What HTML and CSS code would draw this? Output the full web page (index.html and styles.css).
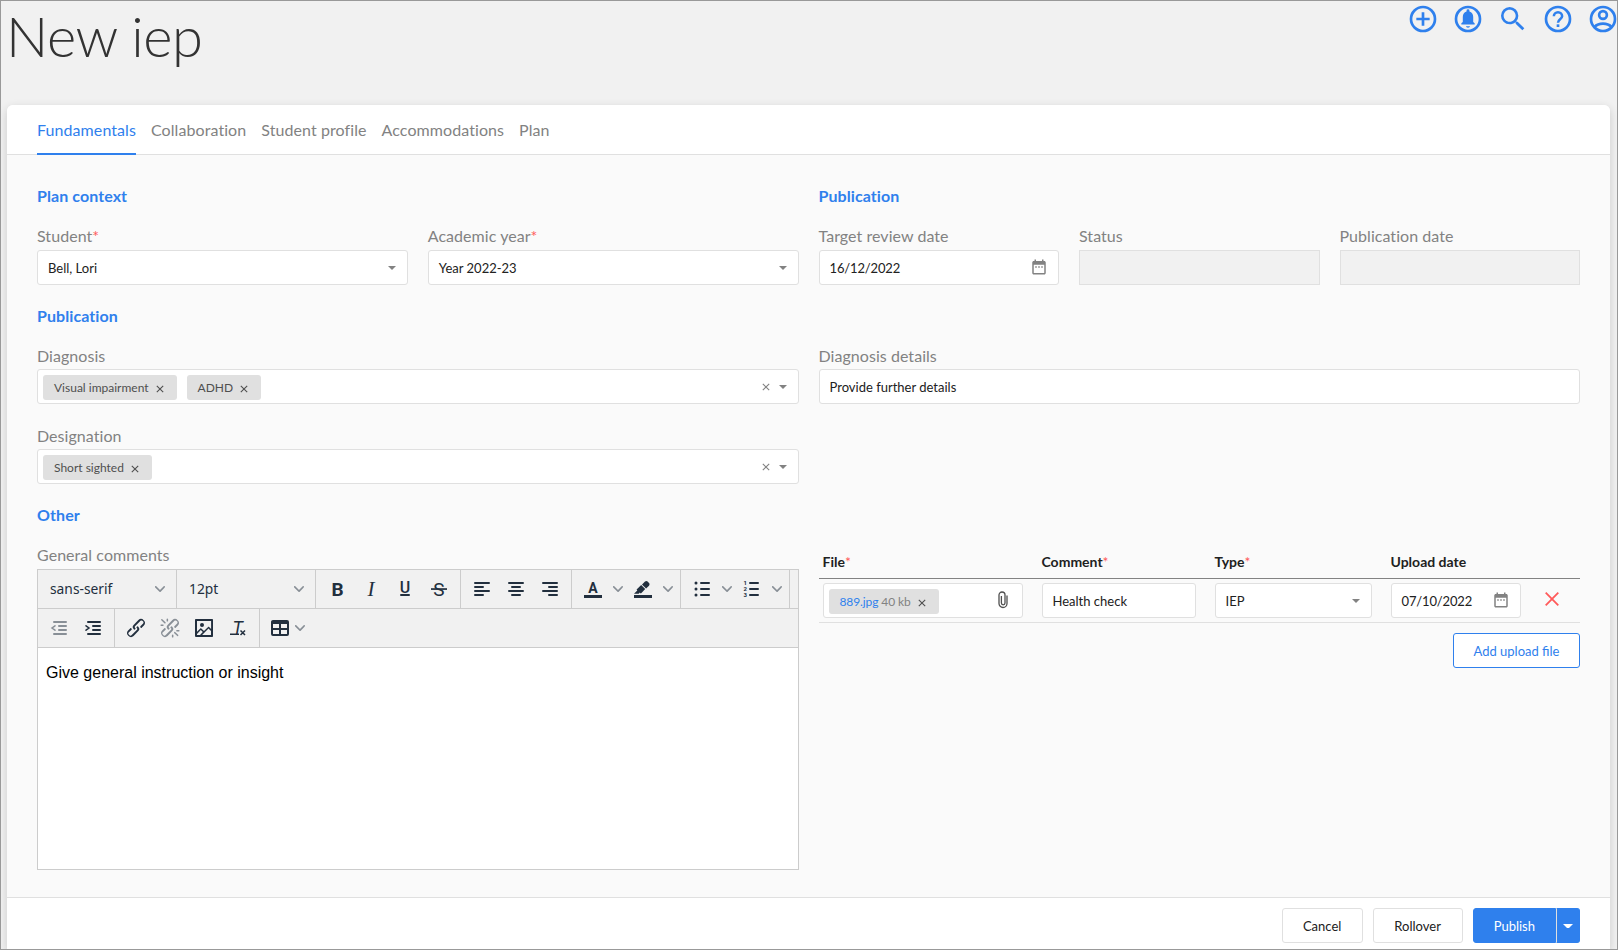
FILE: index.html
```html
<!DOCTYPE html>
<html lang="en">

<head>
    <meta charset="UTF-8">
    <meta name="viewport" content="width=device-width, initial-scale=1.0">
    <title>New iep</title>
    <link rel="stylesheet" href="styles.css">
</head>

<body>
    <!-- shared icons -->
    <svg class="sprite" width="0" height="0">
        <symbol id="calendar" viewBox="0 0 24 24">
            <path d="M19 4h-1V2h-2v2H8V2H6v2H5c-1.1 0-2 .9-2 2v14c0 1.1.9 2 2 2h14c1.1 0 2-.9 2-2V6c0-1.1-.9-2-2-2zm0 16H5V9h14v11zM7 11h2v2H7zm4 0h2v2h-2zm4 0h2v2h-2z" />
        </symbol>
        <symbol id="chevron" viewBox="0 0 10 10">
            <path d="M8.7 2.2c.3-.3.8-.3 1 0 .4.4.4.9 0 1.2L5.7 7.8c-.3.3-.9.3-1.2 0L.2 3.4a.8.8 0 010-1.2c.3-.3.8-.3 1.1 0L5 6l3.7-3.8z" />
        </symbol>
        <symbol id="cross" viewBox="0 0 8 8">
            <path d="M.8.8l6.4 6.4M7.2.8L.8 7.2" fill="none" stroke="currentColor" stroke-width="1.1" />
        </symbol>
        <symbol id="chain" viewBox="0 0 24 24">
            <path d="M6.2 12.3a1 1 0 011.4 1.4l-2.1 2a2 2 0 102.7 2.8l4.8-4.8a1 1 0 000-1.4 1 1 0 111.4-1.3 2.9 2.9 0 010 4L9.6 20a3.9 3.9 0 01-5.5-5.5l2-2zm11.6-.6a1 1 0 01-1.4-1.4l2-2a2 2 0 10-2.6-2.8L11 10.3a1 1 0 000 1.4A1 1 0 119.6 13a2.9 2.9 0 010-4L14.4 4a3.9 3.9 0 015.5 5.5l-2 2z" />
        </symbol>
    </svg>

    <header class="page-header">
        <h1>New iep</h1>
        <nav class="actions">
            <svg viewBox="0 0 24 24"><circle class="ring" cx="12" cy="12" r="9" /><path d="M11 7h2v4h4v2h-4v4h-2v-4H7v-2h4z" /></svg>
            <svg viewBox="0 0 24 24"><circle class="ring" cx="12" cy="12" r="9" /><path d="M12 18.500c.83 0 1.500-.5 1.500-1h-3c0 .5.67 1 1.500 1zM17 15.200v1H7v-1l1.100-1V10.500c0-2.100 1-3.600 2.800-4.100V5.800a1.100 1.100 0 012.200 0v.6c1.800.5 2.800 2 2.800 4.100v3.700z" /></svg>
            <svg viewBox="0 0 24 24"><path d="M15.500 14h-.79l-.28-.27A6.471 6.471 0 0016 9.500 6.500 6.500 0 109.500 16c1.610 0 3.090-.59 4.230-1.570l.27.28v.79l5 4.990L20.490 19l-4.990-5zm-6 0C7.010 14 5 11.990 5 9.500S7.010 5 9.500 5 14 7.010 14 9.500 11.990 14 9.500 14z" /></svg>
            <svg viewBox="0 0 24 24"><circle class="ring" cx="12" cy="12" r="9" /><path d="M8.900 10a3.100 3.100 0 116.200 0c0 2-3.100 2-3.100 4.900" fill="none" stroke="#2f80ed" stroke-width="1.900" /><path d="M11 16h2v2h-2z" /></svg>
            <svg viewBox="0 0 24 24"><circle class="ring" cx="12" cy="12" r="9" /><circle class="ring" cx="12" cy="9" r="2.900" /><path class="ring" d="M5.500 18c1.500-1.500 4-2.500 6.500-2.500s5 1 6.500 2.500" /></svg>
        </nav>
    </header>

    <main class="card">
        <nav class="tabs">
            <a class="tab active">Fundamentals</a>
            <a class="tab">Collaboration</a>
            <a class="tab">Student profile</a>
            <a class="tab">Accommodations</a>
            <a class="tab">Plan</a>
        </nav>

        <div class="form">
            <section class="row">
                <div>
                    <h2>Plan context</h2>
                    <div class="fields two">
                        <div>
                            <label>Student<span class="required">*</span></label>
                            <div class="input"><span>Bell, Lori</span><i class="caret"></i></div>
                        </div>
                        <div>
                            <label>Academic year<span class="required">*</span></label>
                            <div class="input"><span>Year 2022-23</span><i class="caret"></i></div>
                        </div>
                    </div>
                </div>
                <div>
                    <h2>Publication</h2>
                    <div class="fields three">
                        <div>
                            <label>Target review date</label>
                            <div class="input date"><span>16/12/2022</span><svg class="calendar"><use href="#calendar" /></svg></div>
                        </div>
                        <div>
                            <label>Status</label>
                            <div class="input disabled"></div>
                        </div>
                        <div>
                            <label>Publication date</label>
                            <div class="input disabled"></div>
                        </div>
                    </div>
                </div>
            </section>

            <section class="row tight">
                <div>
                    <h2>Publication</h2>
                    <label>Diagnosis</label>
                    <div class="input tags">
                        <span class="tag">Visual impairment<svg><use href="#cross" /></svg></span>
                        <span class="tag">ADHD<svg><use href="#cross" /></svg></span>
                        <svg class="clear"><use href="#cross" /></svg>
                        <i class="caret"></i>
                    </div>
                    <label class="designation">Designation</label>
                    <div class="input tags">
                        <span class="tag">Short sighted<svg><use href="#cross" /></svg></span>
                        <svg class="clear"><use href="#cross" /></svg>
                        <i class="caret"></i>
                    </div>
                </div>
                <div class="details">
                    <label>Diagnosis details</label>
                    <div class="input"><span>Provide further details</span></div>
                </div>
            </section>

            <section class="row">
                <div>
                    <h2>Other</h2>
                    <label>General comments</label>
                    <div class="editor">
                        <div class="toolbar">
                            <div class="group"><span class="select">sans-serif<svg><use href="#chevron" /></svg></span></div>
                            <div class="group"><span class="select">12pt<svg><use href="#chevron" /></svg></span></div>
                            <div class="group">
                                <svg class="tool" viewBox="0 0 24 24"><text class="bold" x="6.500" y="19">B</text></svg>
                                <svg class="tool" viewBox="0 0 24 24"><text class="italic" x="8.500" y="19">I</text></svg>
                                <svg class="tool" viewBox="0 0 24 24"><text class="under" x="6.700" y="16">U</text><rect x="7" y="17" width="10" height="2" rx="1" /></svg>
                                <svg class="tool" viewBox="0 0 24 24"><text class="strike" x="6.300" y="19">S</text><rect x="4" y="11.200" width="16" height="1.700" /></svg>
                            </div>
                            <div class="group">
                                <svg class="tool lines" viewBox="0 0 24 24"><path d="M5 6h14M5 10h8M5 14h14M5 18h8" /></svg>
                                <svg class="tool lines" viewBox="0 0 24 24"><path d="M5 6h14M8 10h8M5 14h14M8 18h8" /></svg>
                                <svg class="tool lines" viewBox="0 0 24 24"><path d="M5 6h14M11 10h8M5 14h14M11 18h8" /></svg>
                            </div>
                            <div class="group">
                                <span class="split"><svg class="tool" viewBox="0 0 24 24"><text class="color" x="7.200" y="16">A</text><path d="M3 18h18v3H3z" /></svg><svg class="arrow"><use href="#chevron" /></svg></span>
                                <span class="split"><svg class="tool" viewBox="0 0 24 24"><path d="M3 18h18v3H3zM7.700 16.700H3l3.300-3.300-.7-.8L10.200 8l4 4.100-4 4.200c-.2.2-.6.2-.8 0l-.6-.7-1.100 1.100zm5-7.500L11 7.400l3-2.900a2 2 0 012.600 0L18 6c.7.7.7 2 0 2.700l-2.900 2.900-1.800-1.800z" /></svg><svg class="arrow"><use href="#chevron" /></svg></span>
                            </div>
                            <div class="group">
                                <span class="split"><svg class="tool lines" viewBox="0 0 24 24"><path d="M11 6h8M11 12h8M11 18h8" /><path class="dots" d="M6 6h0M6 12h0M6 18h0" /></svg><svg class="arrow"><use href="#chevron" /></svg></span>
                                <span class="split"><svg class="tool lines" viewBox="0 0 24 24"><path d="M10 6h8M10 12h8M10 18h8" /><g class="numbers"><text x="3.500" y="8.200">1</text><text x="3.500" y="14.200">2</text><text x="3.500" y="20.200">3</text></g></svg><svg class="arrow"><use href="#chevron" /></svg></span>
                            </div>
                        </div>
                        <div class="toolbar">
                            <div class="group">
                                <svg class="tool lines off" viewBox="0 0 24 24"><path d="M7 6h12M12 10h7M12 14h7M7 18h12" /><path class="thin" d="M8 9.800L5 12l3 2.200" /></svg>
                                <svg class="tool lines" viewBox="0 0 24 24"><path d="M7 6h12M12 10h7M12 14h7M7 18h12" /><path class="thin" d="M5 9.800L8 12l-3 2.200" /></svg>
                            </div>
                            <div class="group">
                                <svg class="tool"><use href="#chain" /></svg>
                                <svg class="tool off" viewBox="0 0 24 24"><use href="#chain" /><path d="M7.600 6.300a.8.8 0 01-1 1.100L3.300 4.200a.7.7 0 111-1l3.200 3.100zM5.100 8.600a.8.8 0 010 1.500H3a.8.8 0 010-1.500H5zm5-3.500a.8.8 0 01-1.500 0V3a.8.8 0 011.500 0V5zm6 11.800a.8.8 0 011-1l3.200 3.200a.8.8 0 01-1 1L16 17zm-2.200 2a.8.8 0 011.500 0V21a.8.8 0 01-1.500 0V19zm5-3.500a.7.7 0 110-1.500H21a.8.8 0 010 1.500H19z" /></svg>
                                <svg class="tool" viewBox="0 0 24 24"><path fill-rule="evenodd" d="M5 15.700l3.300-3.200c.3-.3.7-.3 1 0L12 15l4.100-4c.3-.4.8-.4 1 0l2 1.900V5H5v10.700zM5 18v1h3l2.800-2.900-2-2L5 17.900zm14-3l-2.500-2.400-6.400 6.500H19v-4zM4 3h16c.6 0 1 .4 1 1v16c0 .6-.4 1-1 1H4a1 1 0 01-1-1V4c0-.6.4-1 1-1z" /><circle cx="10" cy="9" r="2" /></svg>
                                <svg class="tool" viewBox="0 0 24 24"><text class="format" x="6.500" y="18">T</text><path d="M4 17.500h9V19H4z" /><path class="thin" d="M14.500 14.500l4.500 4.500M19 14.500L14.500 19" /></svg>
                            </div>
                            <div class="group last">
                                <span class="split"><svg class="tool" viewBox="0 0 24 24"><path fill-rule="evenodd" d="M19 4a2 2 0 012 2v12a2 2 0 01-2 2H5a2 2 0 01-2-2V6c0-1.100.9-2 2-2h14zM5 14v4h6v-4H5zm14 0h-6v4h6v-4zm0-6h-6v4h6V8zM5 12h6V8H5v4z" /></svg><svg class="arrow"><use href="#chevron" /></svg></span>
                            </div>
                        </div>
                        <div class="content">Give general instruction or insight</div>
                    </div>
                </div>

                <div class="uploads">
                    <div class="upload-row head">
                        <span>File<span class="required">*</span></span>
                        <span>Comment<span class="required">*</span></span>
                        <span>Type<span class="required">*</span></span>
                        <span>Upload date</span>
                    </div>
                    <div class="upload-row">
                        <div class="input tags">
                            <span class="tag file"><a>889.jpg</a>&nbsp;40 kb<svg><use href="#cross" /></svg></span>
                            <svg class="clip" viewBox="0 0 10 18"><path d="M9 4.500v8a4 4 0 01-8 0V4a3 3 0 016 0v8a1.800 1.800 0 01-3.600 0V5" /></svg>
                        </div>
                        <div class="input"><span>Health check</span></div>
                        <div class="input"><span>IEP</span><i class="caret"></i></div>
                        <div class="input date"><span>07/10/2022</span><svg class="calendar"><use href="#calendar" /></svg></div>
                        <svg class="remove" viewBox="0 0 14 14"><path d="M.7.7l12.600 12.600M13.300.7L.7 13.300" /></svg>
                    </div>
                    <button class="btn outline">Add upload file</button>
                </div>
            </section>
        </div>

        <footer>
            <button class="btn cancel">Cancel</button>
            <button class="btn rollover">Rollover</button>
            <div class="publish">
                <button class="btn primary">Publish</button>
                <button class="btn primary more"><i class="caret"></i></button>
            </div>
        </footer>
    </main>
</body>

</html>
```
FILE: styles.css
```css
* {
    box-sizing: border-box;
}

body {
    margin: 0;
    height: 950px;
    overflow: hidden;
    border: 1px solid #999;
    background-color: #f1f1f1;
    font-family: Lato, sans-serif;
    font-size: 16px;
    line-height: 24px;
    color: #212121;
    display: flex;
    flex-direction: column;
}

.sprite {
    position: absolute;
}

svg {
    display: block;
    flex: none;
    fill: currentColor;
}

.page-header {
    display: flex;
    justify-content: space-between;
    height: 104px;
    padding-left: 5px;
    flex: none;
}

h1 {
    margin: 0;
    font-size: 56px;
    font-weight: 300;
    line-height: 69px;
    letter-spacing: -0.5px;
    color: #333;
}

.actions {
    display: flex;
    gap: 13px;
    padding-top: 2px;
    margin-right: -2px;
    color: #2f80ed;
}

.actions svg {
    width: 32px;
    height: 32px;
}

.ring {
    fill: none;
    stroke: #2f80ed;
    stroke-width: 2;
}

.card {
    flex: 1;
    display: flex;
    flex-direction: column;
    margin: 0 7px 0 6px;
    border-radius: 6px 6px 0 0;
    background-color: #fafafa;
    box-shadow: 0 3px 10px rgba(0, 0, 0, 0.16);
}

.tabs {
    display: flex;
    gap: 15px;
    height: 50px;
    padding: 0 30px;
    background-color: #fff;
    border-bottom: 1px solid #e0e0e0;
    border-radius: 6px 6px 0 0;
}

.tab {
    height: 50px;
    line-height: 50px;
    letter-spacing: 0.08px;
    color: #828282;
}

.tab.active {
    line-height: 50px;
    color: #2f80ed;
    border-bottom: 2px solid #2f80ed;
}

.form {
    flex: 1;
    padding: 29px 30px 0;
}

.row {
    display: grid;
    grid-template-columns: 1fr 1fr;
    gap: 20px;
    margin-bottom: 19px;
}

.fields {
    display: grid;
    gap: 20px;
}

.two {
    grid-template-columns: 1fr 1fr;
}

.three {
    grid-template-columns: 1fr 1fr 1fr;
}

h2 {
    margin: 0 0 16px;
    font-size: 16px;
    font-weight: 700;
    line-height: 24px;
    letter-spacing: 0.08px;
    color: #2f80ed;
}

label {
    display: block;
    height: 26px;
    letter-spacing: 0.05px;
    color: #828282;
}

.tight label {
    height: 25px;
}

.tight .designation {
    margin-top: 20px;
}

.details {
    padding-top: 40px;
}

.required {
    color: #ff5a5a;
    font-weight: 400;
}

.input {
    display: flex;
    align-items: center;
    justify-content: space-between;
    height: 35px;
    padding: 0 11px 0 10px;
    border: 1px solid #e0e0e0;
    border-radius: 3px;
    background-color: #fff;
    font-size: 13px;
}

.date {
    padding-right: 10px;
    letter-spacing: -0.15px;
}

.disabled {
    background-color: #f1f1f1;
    border-radius: 0;
}

.caret {
    border: 4.500px solid transparent;
    border-top-color: #828282;
    border-bottom: 0;
}

.calendar {
    width: 18px;
    height: 18px;
    margin-top: -1px;
    color: #828282;
}

.tags {
    padding-left: 5px;
    gap: 10px;
    justify-content: flex-start;
}

.tag {
    display: flex;
    align-items: center;
    gap: 7px;
    height: 25px;
    margin-top: 2px;
    padding: 0 13px 0 11px;
    border-radius: 3px;
    background-color: #e0e0e0;
    font-size: 12px;
    color: #4f4f4f;
}

.tag svg {
    width: 8px;
    height: 8px;
    margin-top: 3px;
}

.file {
    gap: 0;
    color: #828282;
    letter-spacing: -0.1px;
}

.file a {
    color: #2f80ed;
}

.file svg {
    margin-left: 7px;
    color: #4f4f4f;
}

.clear {
    width: 8px;
    height: 8px;
    margin: 0 -1px 0 auto;
    color: #828282;
}

.clip {
    width: 10px;
    height: 18px;
    margin: -1px 3px 0 auto;
    fill: none;
    stroke: #4f4f4f;
    stroke-width: 1.300;
}

/* Text editor */
.editor {
    height: 301px;
    border: 1px solid #ccc;
    background-color: #fff;
    color: #222f3e;
}

.toolbar {
    display: flex;
    height: 39px;
    background-color: #f1f1f1;
    border-bottom: 1px solid #ccc;
}

.group {
    display: flex;
    align-items: center;
    padding: 0 4px;
    border-right: 1px solid #ccc;
}

.group.last {
    border-right: 0;
}

.select {
    display: flex;
    align-items: center;
    justify-content: space-between;
    width: 130px;
    padding: 0 7px 0 8px;
    font-family: "Noto Sans", sans-serif;
    font-size: 13.800px;
}

.select svg,
.arrow {
    width: 10px;
    height: 10px;
    opacity: 0.5;
}

.tool {
    width: 24px;
    height: 24px;
    margin: 0 5px;
}

.split {
    display: flex;
    align-items: center;
    width: 50px;
}

.split .tool {
    margin: 0 8px 0 5px;
}

.last .split .tool {
    margin-right: 3px;
    margin-left: 4px;
}

.off {
    opacity: 0.5;
}

.lines {
    stroke: currentColor;
    stroke-width: 2;
    stroke-linecap: round;
}

.dots {
    stroke-width: 3;
}

.thin {
    fill: none;
    stroke: currentColor;
    stroke-width: 1.500;
}

.bold {
    font: 700 19px Roboto, sans-serif;
}

.italic {
    font: italic 400 21px "Liberation Serif", serif;
}

.under {
    font: 500 16px Roboto, sans-serif;
}

.strike {
    font: 400 19px Roboto, sans-serif;
}

.color {
    font: 700 14px Roboto, sans-serif;
}

.format {
    font: italic 400 18px Roboto, sans-serif;
}

.numbers {
    font: 700 6px Roboto, sans-serif;
    stroke: none;
}

.content {
    padding: 13px 8px;
    font-family: "Liberation Sans", Arial, sans-serif;
    color: #000;
}

/* Upload table */
.uploads {
    padding-top: 43px;
    display: flex;
    flex-direction: column;
}

.upload-row {
    display: grid;
    grid-template-columns: 200px 154px 157px 130px 1fr;
    column-gap: 19px;
    align-items: center;
    height: 44px;
    padding-left: 4px;
    border-bottom: 1px solid #e0e0e0;
}

.head {
    height: 33px;
    border-bottom: 1px solid #828282;
    font-size: 14px;
    font-weight: 700;
}

.remove {
    width: 14px;
    height: 14px;
    margin: -4px 0 0 5px;
    stroke: #ff5a5a;
    stroke-width: 1.800;
}

.btn {
    height: 35px;
    padding: 0 20px;
    border: 1px solid #e0e0e0;
    border-radius: 3px;
    background-color: #fff;
    font-family: inherit;
    font-size: 13px;
    color: #212121;
}

.cancel {
    width: 81px;
}

.rollover {
    width: 90px;
}

.outline {
    align-self: flex-end;
    width: 127px;
    padding: 0;
    margin-top: 10px;
    border-color: #2f80ed;
    color: #2f80ed;
}

footer {
    display: flex;
    justify-content: flex-end;
    gap: 10px;
    height: 52px;
    padding: 10px 30px 0;
    border-top: 1px solid #e0e0e0;
    background-color: #fff;
}

.publish {
    display: flex;
}

.primary {
    border-color: #2f80ed;
    border-radius: 3px 0 0 3px;
    background-color: #2f80ed;
    color: #fff;
}

.more {
    width: 24px;
    padding: 0 6px;
    border-left: 1px solid #e0e0e0;
    border-radius: 0 3px 3px 0;
}

.more .caret {
    display: block;
    border-top-color: #fff;
}
```
